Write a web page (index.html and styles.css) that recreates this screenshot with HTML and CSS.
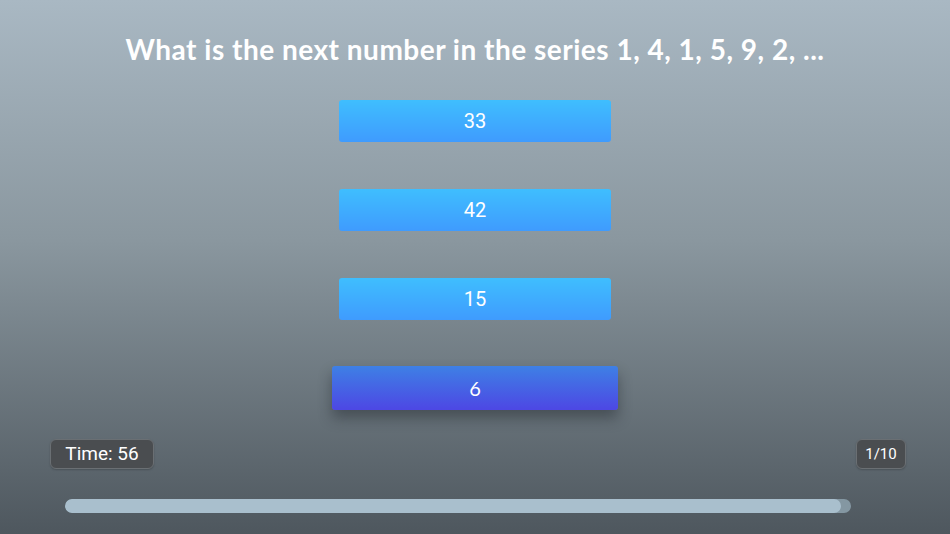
FILE: index.html
```html
<!DOCTYPE html>
<html>
<head>
<meta charset="utf-8">
<link rel="stylesheet" href="styles.css">
</head>
<body>
<div class="screen">
  <h1 class="question">What is the next number in the series 1, 4, 1, 5, 9, 2, ...</h1>
  <div class="answers">
    <div class="answer">33</div>
    <div class="answer">42</div>
    <div class="answer">15</div>
    <div class="answer focused">6</div>
  </div>
  <div class="status">
    <div class="pill timer">Time: 56</div>
    <div class="pill count">1/10</div>
  </div>
  <div class="progress"><div class="fill" style="width: 98.7%"></div></div>
</div>
</body>
</html>
```
FILE: styles.css
```css
html, body {
  margin: 0;
  padding: 0;
}
body {
  width: 950px;
  height: 534px;
  overflow: hidden;
  font-family: "Lato", "Open Sans", sans-serif;
}
.screen {
  width: 950px;
  height: 534px;
  box-sizing: border-box;
  background: linear-gradient(to bottom, #a9b8c3 0%, #8a979f 45%, #4e575e 100%);
  display: flex;
  flex-direction: column;
  align-items: center;
}
.question {
  margin: 31px 0 0;
  color: #fff;
  font-size: 28px;
  font-weight: 700;
  letter-spacing: 0.5px;
  line-height: 36px;
}
.answers {
  margin-top: 33px;
  display: flex;
  flex-direction: column;
  align-items: center;
  gap: 47px;
}
.answer {
  width: 272px;
  height: 42px;
  border-radius: 3px;
  background: linear-gradient(to bottom, #3fbefe, #3f9bfe);
  color: #fff;
  font-family: "Roboto", sans-serif;
  font-size: 20px;
  line-height: 42px;
  text-align: center;
}
.answer.focused {
  width: 286px;
  height: 44px;
  line-height: 44px;
  margin-top: -1px;
  background: linear-gradient(to bottom, #3e80e5, #4d47e4);
  box-shadow: 0 8px 14px rgba(30, 38, 45, 0.45);
  font-family: "Lato", sans-serif;
}
.status {
  align-self: stretch;
  display: flex;
  justify-content: space-between;
  align-items: center;
  padding: 0 44px 0 50px;
  margin-top: 29px;
}
.pill {
  background: #4a4d50;
  border: 1px solid #6a6f73;
  border-radius: 6px;
  color: #fff;
  font-family: "Roboto", sans-serif;
  box-shadow: 0 1px 2px rgba(0,0,0,0.2);
  box-sizing: border-box;
  text-align: center;
}
.timer {
  width: 104px;
  height: 30px;
  line-height: 28px;
  font-size: 19px;
}
.count {
  width: 50px;
  height: 30px;
  line-height: 28px;
  font-size: 15px;
}
.progress {
  align-self: flex-start;
  margin: 30px 0 0 65px;
  width: 786px;
  height: 14px;
  border-radius: 7px;
  background: #8497a2;
  overflow: hidden;
}
.fill {
  height: 100%;
  border-radius: 7px;
  background: #a9bfcd;
}
```
